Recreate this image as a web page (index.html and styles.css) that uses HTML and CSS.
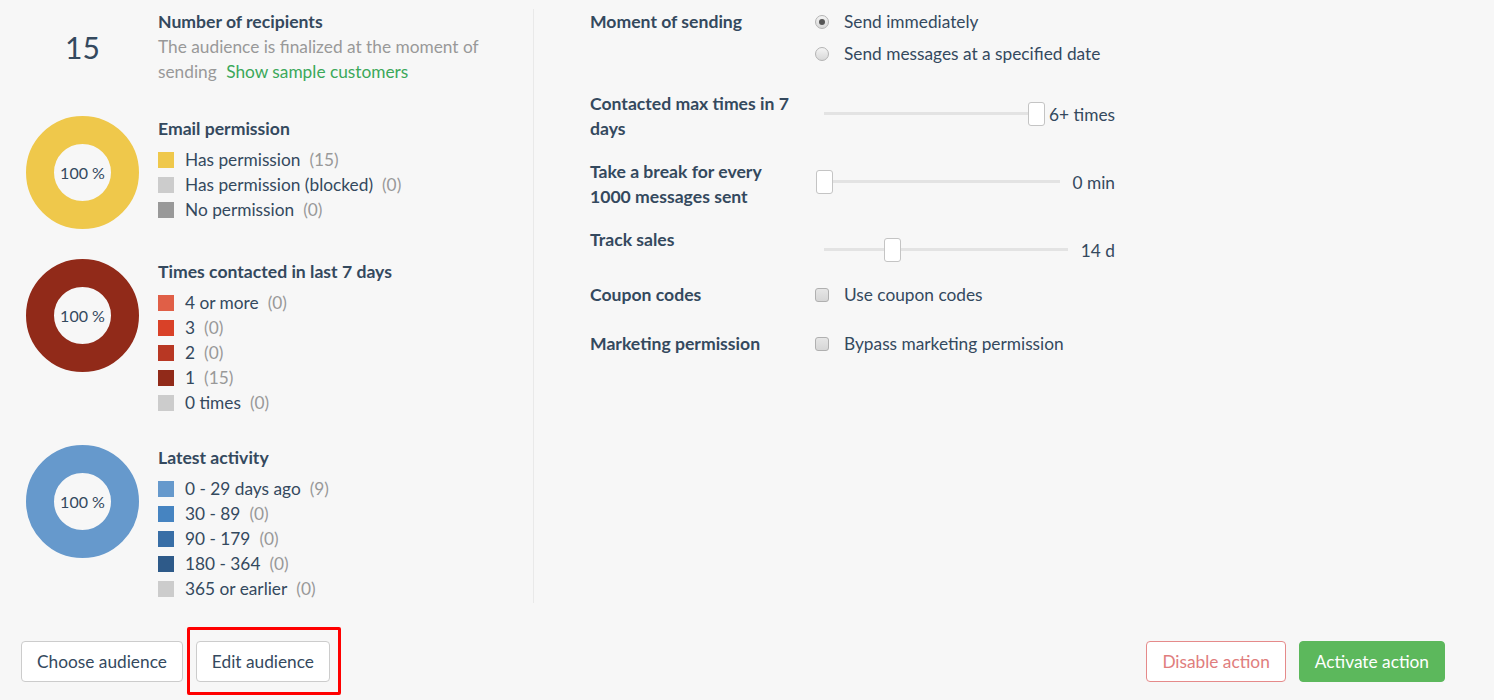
FILE: index.html
```html
<!DOCTYPE html>
<html lang="en">
<head>
<meta charset="utf-8">
<title>Audience</title>
<link rel="stylesheet" href="styles.css">
</head>
<body>
<div class="main">
  <div class="left">
    <div class="recipients">
      <div class="count">15</div>
      <div class="info">
        <div class="title">Number of recipients</div>
        <div class="desc"><span>The audience is finalized at the moment of</span> <span>sending</span> <a class="link" href="#">Show sample customers</a></div>
      </div>
    </div>

    <div class="chart-section">
      <div class="chart-col"><div class="donut donut-yellow"><span>100 %</span></div></div>
      <div class="legend">
        <div class="title legend-title">Email permission</div>
        <div class="item"><span class="sw c-yellow"></span>Has permission<span class="num">(15)</span></div>
        <div class="item"><span class="sw c-light"></span>Has permission (blocked)<span class="num">(0)</span></div>
        <div class="item"><span class="sw c-mid"></span>No permission<span class="num">(0)</span></div>
      </div>
    </div>

    <div class="chart-section">
      <div class="chart-col"><div class="donut donut-red"><span>100 %</span></div></div>
      <div class="legend">
        <div class="title legend-title">Times contacted in last 7 days</div>
        <div class="item"><span class="sw c-r4"></span>4 or more<span class="num">(0)</span></div>
        <div class="item"><span class="sw c-r3"></span>3<span class="num">(0)</span></div>
        <div class="item"><span class="sw c-r2"></span>2<span class="num">(0)</span></div>
        <div class="item"><span class="sw c-r1"></span>1<span class="num">(15)</span></div>
        <div class="item"><span class="sw c-light"></span>0 times<span class="num">(0)</span></div>
      </div>
    </div>

    <div class="chart-section last">
      <div class="chart-col"><div class="donut donut-blue"><span>100 %</span></div></div>
      <div class="legend">
        <div class="title legend-title">Latest activity</div>
        <div class="item"><span class="sw c-b1"></span>0 - 29 days ago<span class="num">(9)</span></div>
        <div class="item"><span class="sw c-b2"></span>30 - 89<span class="num">(0)</span></div>
        <div class="item"><span class="sw c-b3"></span>90 - 179<span class="num">(0)</span></div>
        <div class="item"><span class="sw c-b4"></span>180 - 364<span class="num">(0)</span></div>
        <div class="item"><span class="sw c-light"></span>365 or earlier<span class="num">(0)</span></div>
      </div>
    </div>
  </div>

  <div class="right">
    <div class="row row-radio">
      <div class="label">Moment of sending</div>
      <div class="control options">
        <label class="opt"><span class="radio checked"></span>Send immediately</label>
        <label class="opt"><span class="radio"></span>Send messages at a specified date</label>
      </div>
    </div>

    <div class="row">
      <div class="label">Contacted max times in 7 days</div>
      <div class="control slider">
        <div class="track-wrap"><div class="track"></div><div class="thumb" style="left:100%"></div></div>
        <span class="value">6+ times</span>
      </div>
    </div>

    <div class="row">
      <div class="label">Take a break for every 1000 messages sent</div>
      <div class="control slider">
        <div class="track-wrap"><div class="track"></div><div class="thumb" style="left:0%"></div></div>
        <span class="value">0 min</span>
      </div>
    </div>

    <div class="row">
      <div class="label">Track sales</div>
      <div class="control slider">
        <div class="track-wrap"><div class="track"></div><div class="thumb" style="left:28%"></div></div>
        <span class="value">14 d</span>
      </div>
    </div>

    <div class="row row-check">
      <div class="label">Coupon codes</div>
      <div class="control">
        <label class="opt"><span class="checkbox"></span>Use coupon codes</label>
      </div>
    </div>

    <div class="row row-check">
      <div class="label">Marketing permission</div>
      <div class="control">
        <label class="opt"><span class="checkbox"></span>Bypass marketing permission</label>
      </div>
    </div>
  </div>
</div>

<div class="bottom">
  <div class="btn-group">
    <button class="btn">Choose audience</button>
    <div class="highlight"><button class="btn">Edit audience</button></div>
  </div>
  <div class="btn-group">
    <button class="btn btn-danger">Disable action</button>
    <button class="btn btn-success">Activate action</button>
  </div>
</div>
</body>
</html>
```

FILE: styles.css
```css
* { box-sizing: border-box; }

html { background: #f7f7f7; }

body {
  margin: 0;
  background: #f7f7f7;
  font-family: Lato, "Open Sans", sans-serif;
  font-size: 17.3px;
  line-height: 25px;
  color: #34495e;
  min-height: 700px;
}

.main {
  display: flex;
  padding-top: 9px;
}

/* Left column */
.left {
  width: 534px;
  padding-left: 26px;
  padding-right: 30px;
  border-right: 1px solid #e9e9e9;
}

.recipients {
  display: flex;
  align-items: center;
  margin-bottom: 32px;
}

.count {
  width: 113px;
  margin-right: 19px;
  text-align: center;
  font-size: 30px;
  line-height: 34px;
  color: #34495e;
}

.info { width: 345px; }

.title {
  font-weight: 700;
  font-size: 17.6px;
  color: #34495e;
}

.desc { color: #999; }

.link {
  color: #3ba85a;
  text-decoration: none;
  margin-left: 5px;
}

.chart-section {
  display: flex;
  align-items: flex-start;
  margin-bottom: 30px;
}

.chart-section.last { margin-bottom: 2px; }

.chart-col {
  width: 113px;
  margin-right: 19px;
  flex: none;
}

.donut {
  width: 113px;
  height: 113px;
  border-radius: 50%;
  border: 28.5px solid #ccc;
  background: #f7f7f7;
  display: flex;
  align-items: center;
  justify-content: center;
  font-size: 16px;
  color: #34495e;
  white-space: nowrap;
}

.donut-yellow { border-color: #efc84b; }
.donut-red { border-color: #912a19; }
.donut-blue { border-color: #6699cc; }

.legend-title { margin-bottom: 6px; }

.item {
  display: flex;
  align-items: center;
  white-space: nowrap;
}

.sw {
  width: 16px;
  height: 16px;
  margin-right: 11px;
  flex: none;
}

.num {
  color: #999;
  margin-left: 9px;
}

.c-yellow { background: #efc84b; }
.c-light { background: #cccccc; }
.c-mid { background: #999999; }
.c-r4 { background: #e05f47; }
.c-r3 { background: #d94128; }
.c-r2 { background: #b83723; }
.c-r1 { background: #912a19; }
.c-b1 { background: #6699cc; }
.c-b2 { background: #4684c1; }
.c-b3 { background: #386ea6; }
.c-b4 { background: #2e5a89; }

/* Right column */
.right {
  flex: 1;
  padding-left: 56px;
}

.row {
  display: flex;
  align-items: flex-start;
  margin-bottom: 18px;
}

.row-radio { padding-bottom: 7px; }
.row-check { min-height: 31px; }

.label {
  width: 205px;
  margin-right: 20px;
  font-weight: 700;
  font-size: 17.6px;
  flex: none;
}

.control { width: 300px; }

.options {
  display: flex;
  flex-direction: column;
  gap: 7px;
}

.opt {
  display: flex;
  align-items: center;
  white-space: nowrap;
}

.radio {
  width: 14px;
  height: 14px;
  border-radius: 50%;
  border: 1px solid #b3b3b3;
  background: linear-gradient(#f4f4f4, #d8d8d8);
  margin-right: 15px;
  display: flex;
  align-items: center;
  justify-content: center;
  flex: none;
}

.radio.checked::after {
  content: "";
  width: 6px;
  height: 6px;
  border-radius: 50%;
  background: #555;
}

.checkbox {
  width: 14px;
  height: 14px;
  border-radius: 3px;
  border: 1px solid #b0b0b0;
  background: linear-gradient(#e6e6e6, #d6d6d6);
  margin-right: 15px;
  flex: none;
}

.slider {
  display: flex;
  align-items: center;
  padding-top: 11px;
  height: 37px;
}

.slider .track-wrap {
  flex: 1;
  position: relative;
  height: 24px;
  margin: 0 8px 0 9px;
  align-self: flex-start;
}

.track {
  position: absolute;
  left: 0;
  right: 0;
  top: 10px;
  height: 3px;
  background: #e3e3e3;
}

.thumb {
  position: absolute;
  top: 0;
  width: 17px;
  height: 24px;
  margin-left: -8.5px;
  background: #fff;
  border: 1px solid #c4c4c4;
  border-radius: 3px;
}

.value {
  margin-left: 5px;
  white-space: nowrap;
  align-self: flex-start;
  margin-top: 0;
}

/* Bottom buttons */
.bottom {
  display: flex;
  justify-content: space-between;
  margin-top: 38px;
  padding: 0 49px 20px 21px;
}

.btn-group {
  display: flex;
  align-items: flex-start;
  gap: 13px;
}

.btn {
  height: 41px;
  padding: 0 15px;
  border: 1px solid #cccccc;
  border-radius: 4px;
  background: #fff;
  font-family: Lato, "Open Sans", sans-serif;
  font-size: 17.3px;
  color: #34495e;
  cursor: pointer;
}

.btn-danger {
  border-color: #e58a8a;
  color: #e07d7d;
}

.btn-success {
  background: #5cb85c;
  border-color: #5cb85c;
  color: #fff;
}

.highlight {
  position: relative;
  display: flex;
  height: 41px;
}

.highlight::after {
  content: "";
  position: absolute;
  top: -14px;
  bottom: -13px;
  left: -9px;
  right: -11px;
  border: 3px solid #ff0000;
  border-radius: 2px;
  pointer-events: none;
}
```
